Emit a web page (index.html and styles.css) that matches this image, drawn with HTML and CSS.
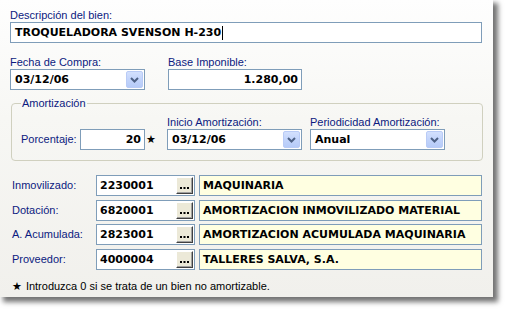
FILE: index.html
```html
<!DOCTYPE html>
<html lang="es">
<head>
<meta charset="utf-8">
<title>Bien</title>
<link rel="stylesheet" href="styles.css">
</head>
<body>
<div class="panel">
  <label class="lbl">Descripción del bien:</label>
  <div class="box desc"><span class="val">TROQUELADORA SVENSON H-230</span><span class="caret"></span></div>

  <div class="row2">
    <div class="fld w135">
      <label class="lbl">Fecha de Compra:</label>
      <div class="box combo"><span class="val">03/12/06</span><span class="cbtn"><svg width="9" height="6" viewBox="0 0 9 6"><path d="M1 1 L4.5 4.5 L8 1" fill="none" stroke="#4d6185" stroke-width="2"/></svg></span></div>
    </div>
    <div class="fld w134 ml23">
      <label class="lbl">Base Imponible:</label>
      <div class="box num"><span class="val">1.280,00</span></div>
    </div>
  </div>

  <fieldset class="group">
    <legend class="legend">Amortización</legend>
    <div class="grow">
      <div class="pct">
        <label class="lbl plbl">Porcentaje:</label>
        <div class="box num pbox"><span class="val">20</span></div>
        <span class="star">★</span>
      </div>
      <div class="fld w135">
        <label class="lbl">Inicio Amortización:</label>
        <div class="box combo"><span class="val">03/12/06</span><span class="cbtn"><svg width="9" height="6" viewBox="0 0 9 6"><path d="M1 1 L4.5 4.5 L8 1" fill="none" stroke="#4d6185" stroke-width="2"/></svg></span></div>
      </div>
      <div class="fld w135 ml8">
        <label class="lbl">Periodicidad Amortización:</label>
        <div class="box combo"><span class="val">Anual</span><span class="cbtn"><svg width="9" height="6" viewBox="0 0 9 6"><path d="M1 1 L4.5 4.5 L8 1" fill="none" stroke="#4d6185" stroke-width="2"/></svg></span></div>
      </div>
    </div>
  </fieldset>

  <div class="accounts">
    <div class="arow">
      <label class="lbl alabel">Inmovilizado:</label>
      <div class="box code"><span class="val">2230001</span><span class="ebtn"><svg width="9" height="2" viewBox="0 0 9 2"><rect x="0" y="0" width="2" height="2"/><rect x="3.5" y="0" width="2" height="2"/><rect x="7" y="0" width="2" height="2"/></svg></span></div>
      <div class="box name"><span class="val">MAQUINARIA</span></div>
    </div>
    <div class="arow">
      <label class="lbl alabel">Dotación:</label>
      <div class="box code"><span class="val">6820001</span><span class="ebtn"><svg width="9" height="2" viewBox="0 0 9 2"><rect x="0" y="0" width="2" height="2"/><rect x="3.5" y="0" width="2" height="2"/><rect x="7" y="0" width="2" height="2"/></svg></span></div>
      <div class="box name"><span class="val">AMORTIZACION INMOVILIZADO MATERIAL</span></div>
    </div>
    <div class="arow">
      <label class="lbl alabel">A. Acumulada:</label>
      <div class="box code"><span class="val">2823001</span><span class="ebtn"><svg width="9" height="2" viewBox="0 0 9 2"><rect x="0" y="0" width="2" height="2"/><rect x="3.5" y="0" width="2" height="2"/><rect x="7" y="0" width="2" height="2"/></svg></span></div>
      <div class="box name"><span class="val">AMORTIZACION ACUMULADA MAQUINARIA</span></div>
    </div>
    <div class="arow">
      <label class="lbl alabel">Proveedor:</label>
      <div class="box code"><span class="val">4000004</span><span class="ebtn"><svg width="9" height="2" viewBox="0 0 9 2"><rect x="0" y="0" width="2" height="2"/><rect x="3.5" y="0" width="2" height="2"/><rect x="7" y="0" width="2" height="2"/></svg></span></div>
      <div class="box name"><span class="val">TALLERES SALVA, S.A.</span></div>
    </div>
  </div>

  <p class="note"><span class="nstar">★</span>Introduzca 0 si se trata de un bien no amortizable.</p>
</div>
</body>
</html>
```
FILE: styles.css
```css
* { box-sizing: border-box; }
html, body { margin: 0; padding: 0; background: #ffffff; }
body { width: 507px; height: 312px; overflow: hidden; }

.panel {
  width: 493px;
  height: 297px;
  padding: 9px 11px 0 10px;
  background: linear-gradient(to bottom, #fefefe 0%, #f7f7f4 40%, #f1f0ec 100%);
  box-shadow: 4px 4px 5px 1px rgba(0,0,0,0.55);
  font-family: "Liberation Sans", Arial, sans-serif;
  font-size: 11px;
}

.lbl {
  display: block;
  color: #0c1a80;
  font-size: 11px;
  line-height: 13px;
  white-space: nowrap;
}

.box {
  display: flex;
  align-items: center;
  height: 21px;
  border: 1px solid #7f9db9;
  background: #ffffff;
  padding: 0 3px;
  font-family: "DejaVu Sans", Verdana, sans-serif;
  font-weight: bold;
  font-size: 11px;
  color: #000000;
  white-space: nowrap;
}
.val { line-height: 13px; }

.desc { width: 472px; padding-left: 4px; }
.caret { display: inline-block; width: 1px; height: 14px; background: #000; margin-left: 1px; }

.row2 { display: flex; margin-top: 13px; }
.w135 { width: 135px; }
.w134 { width: 134px; }
.ml23 { margin-left: 23px; }
.ml8 { margin-left: 8px; }

.combo { padding: 1px 1px 1px 4px; }
.combo .val { flex: 1; }
.cbtn {
  width: 17px;
  height: 100%;
  display: flex;
  align-items: center;
  justify-content: center;
  border: 1px solid #b9cbf6;
  border-radius: 2px;
  background: linear-gradient(to bottom, #d3e0fd 0%, #c2d4fb 50%, #b6cbf8 100%);
}

.num { justify-content: flex-end; }

.group {
  margin: 7px 0 0 1px;
  width: 472px;
  padding: 6px 8px 10px 9px;
  border: 1px solid #d0d0bf;
  border-radius: 4px;
}
.legend {
  padding: 0 1px;
  color: #0c1a80;
  font-size: 11px;
  line-height: 13px;
}
.grow { display: flex; align-items: flex-end; }
.pct { display: flex; align-items: center; width: 146px; }
.plbl { width: 59px; }
.pbox { width: 65px; }
.star { width: 22px; padding-left: 1px; font-family: "DejaVu Sans", sans-serif; font-size: 11px; line-height: 13px; color: #000; }

.accounts { margin-top: 14px; padding-left: 2px; display: flex; flex-direction: column; gap: 3.5px; }
.arow { display: flex; align-items: center; }
.alabel { width: 84px; }
.code { width: 99px; padding: 1px 1px 1px 3px; }
.code .val { flex: 1; }
.ebtn {
  width: 17px;
  height: 100%;
  display: flex;
  align-items: flex-end;
  justify-content: center;
  padding-bottom: 4px;
  background: #ece9d8;
  border-top: 1px solid #ffffff;
  border-left: 1px solid #ffffff;
  border-right: 1px solid #404040;
  border-bottom: 1px solid #404040;
  box-shadow: inset -1px -1px 0 #a0a0a0;
}
.ebtn svg { display: block; fill: #000; }
.name { width: 283px; margin-left: 4px; background: #ffffe1; }

.note {
  margin: 10px 0 0 2px;
  line-height: 13px;
  font-size: 11px;
  color: #000;
}
.nstar { font-family: "DejaVu Sans", sans-serif; font-size: 11px; margin-right: 4px; }
```
